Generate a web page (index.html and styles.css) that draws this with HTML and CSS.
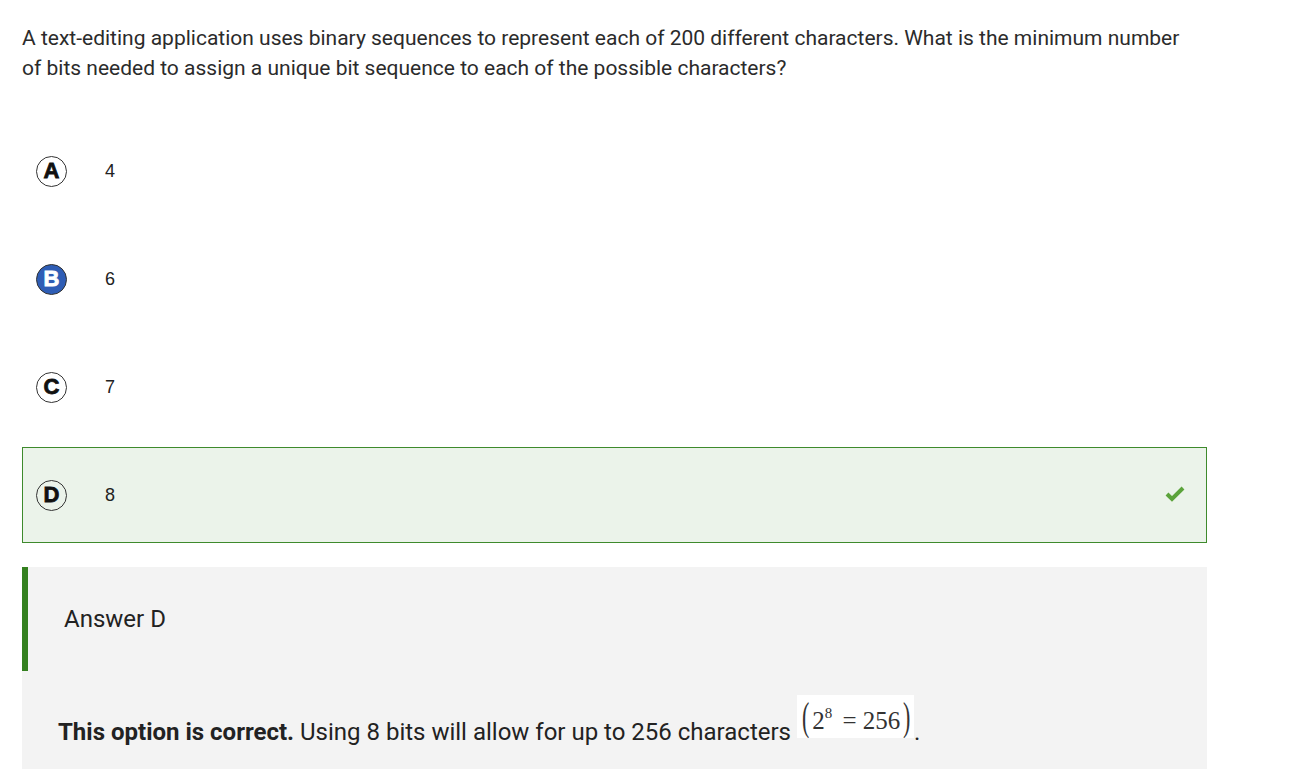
FILE: index.html
```html
<!DOCTYPE html>
<html lang="en">
<head>
<meta charset="utf-8">
<title>Question</title>
<link rel="stylesheet" href="styles.css">
</head>
<body>
<div class="page">
  <p class="question">A text-editing application uses binary sequences to represent each of 200 different characters. What is the minimum number of bits needed to assign a unique bit sequence to each of the possible characters?</p>
  <div class="options">
    <div class="option">
      <span class="letter">A</span>
      <span class="value">4</span>
    </div>
    <div class="option">
      <span class="letter selected">B</span>
      <span class="value">6</span>
    </div>
    <div class="option">
      <span class="letter">C</span>
      <span class="value">7</span>
    </div>
    <div class="option correct">
      <span class="letter">D</span>
      <span class="value">8</span>
      <svg class="check" width="20" height="16" viewBox="0 0 20 16"><polyline points="2,8 7,13 18,2" fill="none" stroke="#5ba33b" stroke-width="4"/></svg>
    </div>
  </div>
  <div class="explain">
    <div class="explain-head">Answer D</div>
    <p class="explain-body"><b>This option is correct.</b> Using 8 bits will allow for up to 256 characters <span class="math"><span class="paren">(</span>2<sup>8</sup> = 256<span class="paren">)</span></span>.</p>
  </div>
</div>
</body>
</html>
```
FILE: styles.css
```css
html, body {
  margin: 0;
  padding: 0;
  background: #ffffff;
}
body {
  font-family: Roboto, "Liberation Sans", Arial, sans-serif;
  color: #2b2b2b;
}
.page {
  width: 1185px;
  padding-left: 22px;
  padding-top: 23px;
}
.question {
  margin: 0;
  width: 1175px;
  font-size: 21px;
  line-height: 30px;
}
.options {
  margin-top: 40px;
  display: flex;
  flex-direction: column;
  gap: 12px;
}
.option {
  height: 94px;
  border: 1px solid transparent;
  display: flex;
  align-items: center;
  padding-left: 13px;
  padding-right: 20px;
}
.option.correct {
  background: #ebf3ea;
  border-color: #3e8a2c;
}
.letter {
  box-sizing: border-box;
  width: 31px;
  height: 31px;
  border: 1px solid #333;
  border-radius: 50%;
  display: flex;
  align-items: center;
  justify-content: center;
  font-family: "Liberation Sans", Arial, sans-serif;
  font-weight: bold;
  font-size: 22px;
  color: #111;
  -webkit-text-stroke: 0.8px #111;
}
.letter.selected {
  background: #2e5db5;
  color: #fff;
  -webkit-text-stroke: 0.8px #fff;
}
.value {
  margin-left: 38px;
  font-family: "Liberation Sans", Arial, sans-serif;
  font-size: 18px;
  color: #222;
}
.check {
  margin-left: auto;
  margin-right: 1px;
  margin-top: -2px;
}
.explain {
  margin-top: 24px;
  background: #f3f3f3;
  min-height: 202px;
}
.explain-head {
  height: 104px;
  border-left: 6px solid #34801f;
  box-sizing: border-box;
  display: flex;
  align-items: center;
  padding-left: 36px;
  font-size: 24px;
  color: #222;
}
.explain-body {
  margin: 0;
  padding: 24px 0 0 36px;
  font-size: 24px;
  line-height: 30px;
  color: #222;
}
.explain-body b {
  font-weight: 700;
}
.math {
  display: inline-block;
  overflow: hidden;
  background: #fff;
  width: 117px;
  height: 43px;
  box-sizing: border-box;
  padding-left: 2px;
  font-family: "Liberation Serif", "Times New Roman", serif;
  font-size: 25px;
  line-height: 43px;
  color: #333;
  vertical-align: 2px;
  white-space: nowrap;
}
.math sup {
  font-size: 15px;
  vertical-align: 11px;
  line-height: 0;
  margin-right: 4px;
}
.paren {
  font-size: 40px;
  font-weight: 100;
  display: inline-block;
  transform: scaleX(0.55);
  vertical-align: -1px;
  line-height: 43px;
}
```
